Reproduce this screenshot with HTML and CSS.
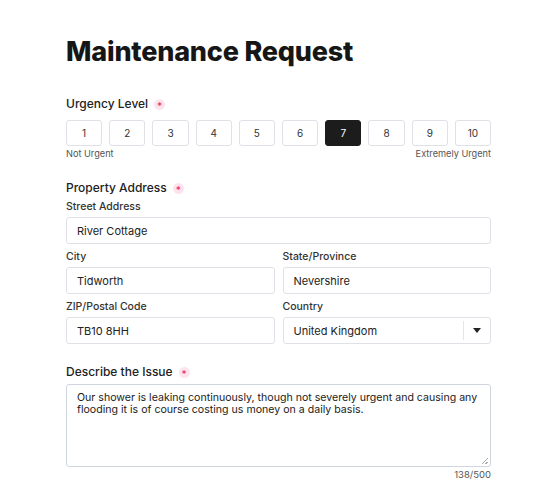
FILE: index.html
```html
<!DOCTYPE html>
<html lang="en">
<head>
<meta charset="utf-8">
<title>Maintenance Request</title>
<link rel="stylesheet" href="styles.css">
</head>
<body>
<main class="form">
  <h1 class="title">Maintenance Request</h1>

  <section class="group urgency">
    <div class="label">Urgency Level <span class="req">*</span></div>
    <div class="scale">
      <button class="step">1</button>
      <button class="step">2</button>
      <button class="step">3</button>
      <button class="step">4</button>
      <button class="step">5</button>
      <button class="step">6</button>
      <button class="step active">7</button>
      <button class="step">8</button>
      <button class="step">9</button>
      <button class="step">10</button>
    </div>
    <div class="hints"><span>Not Urgent</span><span>Extremely Urgent</span></div>
  </section>

  <section class="group address">
    <div class="label">Property Address <span class="req">*</span></div>
    <div class="field first">
      <div class="sublabel">Street Address</div>
      <div class="input">River Cottage</div>
    </div>
    <div class="row">
      <div class="field">
        <div class="sublabel">City</div>
        <div class="input">Tidworth</div>
      </div>
      <div class="field">
        <div class="sublabel">State/Province</div>
        <div class="input">Nevershire</div>
      </div>
    </div>
    <div class="row">
      <div class="field">
        <div class="sublabel">ZIP/Postal Code</div>
        <div class="input">TB10 8HH</div>
      </div>
      <div class="field">
        <div class="sublabel">Country</div>
        <div class="input select">
          <span class="select-value">United Kingdom</span>
          <span class="select-sep"></span>
          <span class="select-arrow"></span>
        </div>
      </div>
    </div>
  </section>

  <section class="group issue">
    <div class="label">Describe the Issue <span class="req">*</span></div>
    <div class="textarea">Our shower is leaking continuously, though not severely urgent and causing any flooding it is of course costing us money on a daily basis.<span class="grip"></span></div>
    <div class="counter">138/500</div>
  </section>
</main>
</body>
</html>
```

FILE: styles.css
```css
* { box-sizing: border-box; }
html, body { margin: 0; padding: 0; background: #ffffff; }
body {
  font-family: Inter, "Noto Sans", "Liberation Sans", sans-serif;
  color: #1a1a1a;
}
.form {
  width: 425px;
  margin-left: 66px;
  padding-top: 35px;
}
.title {
  margin: 0;
  font-size: 27px;
  line-height: 34px;
  font-weight: 800;
  letter-spacing: -0.2px;
  color: #161616;
}
.label {
  font-size: 12px;
  line-height: 16px;
  font-weight: 500;
  color: #222;
  display: flex;
  align-items: center;
  gap: 6px;
}
.req {
  display: inline-flex;
  align-items: center;
  justify-content: center;
  width: 11px;
  height: 11px;
  border-radius: 50%;
  background: #fde4ec;
  color: #e8336b;
  font-size: 10px;
  line-height: 1;
  padding-top: 3px;
}
.urgency { margin-top: 27px; }
.scale {
  display: flex;
  gap: 7px;
  margin-top: 8px;
}
.step {
  flex: 1;
  height: 26px;
  border: 1px solid #dfe1e6;
  border-radius: 3px;
  background: #fff;
  font-family: inherit;
  font-size: 10px;
  color: #333;
  padding: 0;
}
.step.active {
  background: #1c1c1c;
  border-color: #1c1c1c;
  color: #fff;
}
.hints {
  display: flex;
  justify-content: space-between;
  margin-top: 2px;
  font-size: 9.2px;
  line-height: 12px;
  color: #555;
}
.address { margin-top: 20px; }
.field { display: flex; flex-direction: column; }
.sublabel {
  font-size: 10.5px;
  line-height: 14px;
  font-weight: 500;
  color: #333;
  margin-bottom: 3px;
}
.field.first { margin-top: 4px; }
.row {
  display: grid;
  grid-template-columns: 1fr 1fr;
  gap: 8px;
  margin-top: 6px;
}
.input {
  height: 27px;
  border: 1px solid #dfe1e6;
  border-radius: 3px;
  padding: 0 10px;
  display: flex;
  align-items: center;
  font-size: 11px;
  color: #222;
}
.select { padding-right: 0; }
.select-value { flex: 1; }
.select-sep {
  width: 1px;
  height: 19px;
  background: #e3e5e9;
}
.select-arrow {
  width: 26px;
  height: 100%;
  display: flex;
  align-items: center;
  justify-content: center;
}
.select-arrow::before {
  content: "";
  border-left: 4.5px solid transparent;
  border-right: 4.5px solid transparent;
  border-top: 5px solid #222;
}
.issue { margin-top: 20px; }
.textarea {
  position: relative;
  margin-top: 4px;
  height: 83px;
  border: 1px solid #cfd6e0;
  border-radius: 3px;
  padding: 7px 10px;
  font-size: 10.6px;
  line-height: 12px;
  color: #222;
}
.grip {
  position: absolute;
  right: 2px;
  bottom: 2px;
  width: 6px;
  height: 6px;
  background: linear-gradient(135deg, transparent 45%, #aaa 45%, #aaa 55%, transparent 55%, transparent 75%, #aaa 75%, #aaa 85%, transparent 85%);
}
.counter {
  text-align: right;
  font-size: 9.5px;
  line-height: 12px;
  margin-top: 2px;
  color: #555;
}
```
